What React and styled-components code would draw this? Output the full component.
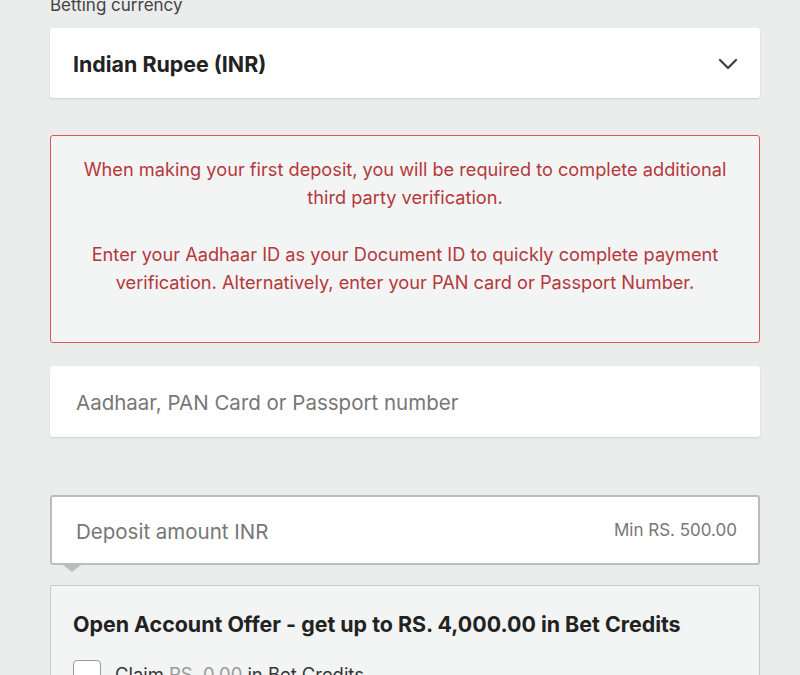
import React from "react";
import styled, { createGlobalStyle } from "styled-components";

const Global = createGlobalStyle`
  html, body { margin: 0; padding: 0; background: #ebecec; }
  body { font-family: Inter, "Liberation Sans", Arial, sans-serif; overflow: hidden; }
  * { box-sizing: border-box; }
`;

const Page = styled.div`
  padding: 0 40px 0 50px;
  display: flex;
  flex-direction: column;
`;

const Label = styled.div`
  margin-top: -5px;
  height: 20px;
  font-size: 17px;
  line-height: 20px;
  color: #444;
`;

const Select = styled.div`
  margin-top: 13px;
  height: 70px;
  background: #fff;
  border-radius: 3px;
  box-shadow: 0 1px 2px rgba(0,0,0,0.12);
  display: flex;
  align-items: center;
  justify-content: space-between;
  padding: 2px 22px 0 23px;
  font-size: 21.4px;
  font-weight: 700;
  color: #222;
`;

const Notice = styled.div`
  margin-top: 37px;
  height: 208px;
  border: 1px solid #d9575a;
  border-radius: 3px;
  background: #f3f4f4;
  padding: 19px 20px 0;
  color: #b5383c;
  font-size: 18.2px;
  line-height: 28px;
  text-align: center;
  p { margin: 0; }
  p + p { margin-top: 29px; }
`;

const TextField = styled.div`
  margin-top: ${(p) => p.$mt}px;
  height: ${(p) => (p.$boxed ? 70 : 71)}px;
  background: #fff;
  border-radius: 3px;
  border: ${(p) => (p.$boxed ? "2px solid #bbbcbc" : "none")};
  box-shadow: ${(p) => (p.$boxed ? "none" : "0 1px 2px rgba(0,0,0,0.12)")};
  display: flex;
  align-items: center;
  justify-content: space-between;
  padding: 2px ${(p) => (p.$boxed ? 21 : 22)}px 0 ${(p) => (p.$boxed ? 24 : 26)}px;
  position: relative;
`;

const Placeholder = styled.span`
  font-size: 20.5px;
  color: #777;
`;

const Hint = styled.span`
  font-size: 17px;
  color: #777;
  margin-top: -2px;
`;

const Pointer = styled.div`
  position: absolute;
  left: 11px;
  bottom: -9px;
  width: 0;
  height: 0;
  border-left: 9px solid transparent;
  border-right: 9px solid transparent;
  border-top: 7px solid #bbbcbc;
`;

const Offer = styled.div`
  margin-top: 20px;
  border: 1px solid #c9caca;
  border-radius: 2px;
  background: #f3f4f4;
  padding: 24px 22px 40px;
  display: flex;
  flex-direction: column;
  gap: 22px;
`;

const OfferTitle = styled.div`
  font-size: 21.4px;
  font-weight: 700;
  line-height: 28px;
  color: #222;
`;

const ClaimRow = styled.label`
  display: flex;
  align-items: center;
  gap: 14px;
  font-size: 18.4px;
  color: #333;
`;

const Box = styled.span`
  width: 28px;
  height: 28px;
  background: #fff;
  border: 1px solid #9a9a9a;
  border-radius: 4px;
  flex: none;
`;

const Muted = styled.span`
  color: #999;
`;

export default function App() {
  return (
    <>
      <Global />
      <Page>
        <Label>Betting currency</Label>
        <Select>
          <span>Indian Rupee (INR)</span>
          <svg width="20" height="12" viewBox="0 0 20 12" fill="none">
            <path d="M2 2l8 8 8-8" stroke="#444" strokeWidth="2.4" strokeLinecap="round" strokeLinejoin="round" />
          </svg>
        </Select>
        <Notice>
          <p>When making your first deposit, you will be required to complete additional third party verification.</p>
          <p>Enter your Aadhaar ID as your Document ID to quickly complete payment verification. Alternatively, enter your PAN card or Passport Number.</p>
        </Notice>
        <TextField $mt={23}>
          <Placeholder>Aadhaar, PAN Card or Passport number</Placeholder>
        </TextField>
        <TextField $mt={58} $boxed>
          <Placeholder>Deposit amount INR</Placeholder>
          <Hint>Min RS. 500.00</Hint>
          <Pointer />
        </TextField>
        <Offer>
          <OfferTitle>Open Account Offer - get up to RS. 4,000.00 in Bet Credits</OfferTitle>
          <ClaimRow>
            <Box />
            <span>Claim <Muted>RS. 0.00</Muted> in Bet Credits</span>
          </ClaimRow>
        </Offer>
      </Page>
    </>
  );
}
